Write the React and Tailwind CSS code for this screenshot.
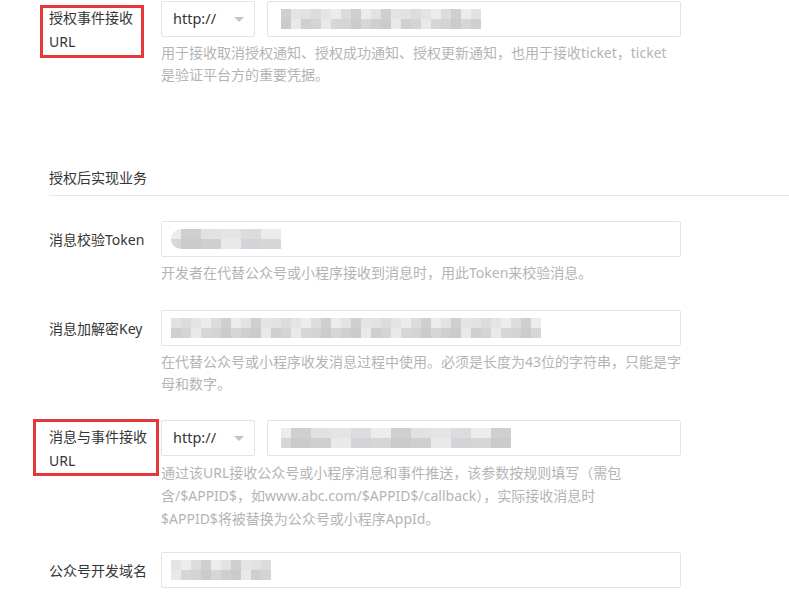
import React from 'react';

const font = { fontFamily: '"Noto Sans", "Noto Sans CJK SC", sans-serif' };

// pixelated "mosaic" standing in for the blurred values
const shades = ['#e4e4e4', '#d6d6d6', '#cfcfcf', '#e9e9e9', '#dcdcdc', '#c9cbcc', '#e1e3e1', '#d3d4d8', '#ececec', '#cdd0cf'];

const Mosaic = ({ cols, seed = 1, round = false }) => {
  const rows = [0, 1];
  return (
    <div className={`flex flex-col blur-[0.6px] ${round ? 'rounded-l-full overflow-hidden' : ''}`}>
      {rows.map((r) => (
        <div key={r} className="flex">
          {Array.from({ length: cols }).map((_, i) => {
            const c = shades[(i * 7 + r * 3 + seed * 5 + ((i * i + seed) % 4)) % shades.length];
            return <div key={i} className="w-[10px] h-[10px]" style={{ backgroundColor: c }} />;
          })}
        </div>
      ))}
    </div>
  );
};

const Input = ({ className = '', children }) => (
  <div className={`h-[36px] border border-[#e4e4e4] rounded-[2px] bg-white flex items-center ${className}`}>
    {children}
  </div>
);

const Select = () => (
  <div className="w-[94px] h-[36px] border border-[#e4e4e4] rounded-[2px] bg-white flex items-center justify-between pl-[11px] pr-[10px] text-[14.5px] text-[#353535]">
    <span>http://</span>
    <span className="w-0 h-0 border-l-[5px] border-r-[5px] border-t-[5px] border-l-transparent border-r-transparent border-t-[#c4c4c4]" />
  </div>
);

const Helper = ({ children, lead = 'leading-[22px]' }) => (
  <p className={`mt-[5px] text-[14px] ${lead} text-[#b4b4b4]`}>{children}</p>
);

const Row = ({ label, multi, boxed, children, className = '' }) => (
  <div className={`flex ${className}`}>
    <div className="relative w-[112px] shrink-0">
      {multi ? (
        <div className="pt-[5px] text-[14px] leading-[24px] text-[#353535]">{label}</div>
      ) : (
        <div className="h-[36px] flex items-center text-[14px] text-[#353535]">{label}</div>
      )}
      {boxed}
    </div>
    <div className="w-[520px]">{children}</div>
  </div>
);

export default function App() {
  return (
    <div className="w-[789px] h-[595px] overflow-hidden bg-white pl-[49px] pt-px" style={font}>
      <Row
        label={<>授权事件接收<br />URL</>}
        multi
        boxed={<div className="absolute left-[-9px] top-[4px] w-[104px] h-[53px] border-[3px] border-[#e5383b]" />}
      >
        <div className="flex gap-[12px]">
          <Select />
          <Input className="flex-1 pl-[13px]">
            <Mosaic cols={20} seed={2} />
          </Input>
        </div>
        <Helper>
          用于接收取消授权通知、授权成功通知、授权更新通知，也用于接收ticket，ticket<br />
          是验证平台方的重要凭据。
        </Helper>
      </Row>

      <div className="mt-[81px] -mr-4 pb-[6px] border-b border-[#e6e6e6] text-[14px] leading-[22px] text-[#353535]">
        授权后实现业务
      </div>

      <Row label="消息校验Token" className="mt-[25px]">
        <Input className="pl-[9px]">
          <Mosaic cols={11} seed={3} round />
        </Input>
        <Helper lead="leading-[22px] -mt-px">开发者在代替公众号或小程序接收到消息时，用此Token来校验消息。</Helper>
      </Row>

      <Row label="消息加解密Key" className="mt-[26px]">
        <Input className="pl-[9px]">
          <Mosaic cols={37} seed={5} />
        </Input>
        <Helper>
          在代替公众号或小程序收发消息过程中使用。必须是长度为43位的字符串，只能是字<br />
          母和数字。
        </Helper>
      </Row>

      <Row
        label={<>消息与事件接收<br />URL</>}
        multi
        className="mt-[25px]"
        boxed={<div className="absolute left-[-16px] top-[-1px] w-[126px] h-[57px] border-[3px] border-[#e5383b]" />}
      >
        <div className="flex gap-[12px]">
          <Select />
          <Input className="flex-1 pl-[13px]">
            <Mosaic cols={23} seed={7} />
          </Input>
        </div>
        <Helper lead="leading-[23px]">
          通过该URL接收公众号或小程序消息和事件推送，该参数按规则填写（需包<br />
          含/$APPID$，如www.abc.com/$APPID$/callback），实际接收消息时<br />
          $APPID$将被替换为公众号或小程序AppId。
        </Helper>
      </Row>

      <Row label="公众号开发域名" className="mt-[22px]">
        <Input className="pl-[9px]">
          <Mosaic cols={10} seed={4} />
        </Input>
      </Row>
    </div>
  );
}
